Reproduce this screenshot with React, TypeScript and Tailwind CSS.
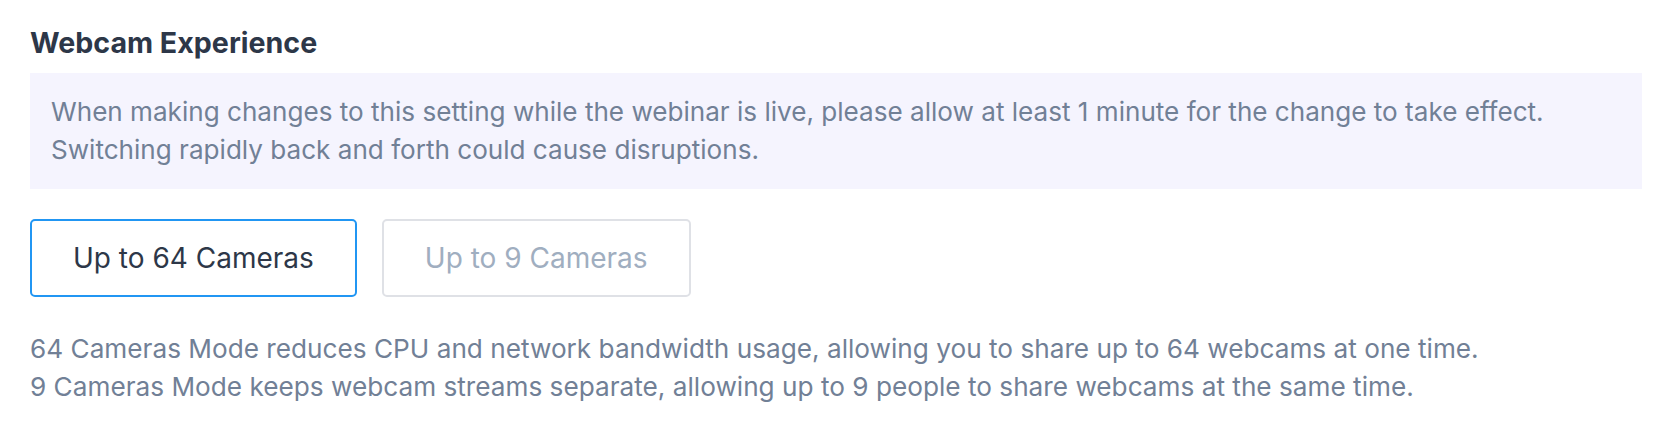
import { useState } from 'react'

const modes = [
  { id: '64', label: 'Up to 64 Cameras' },
  { id: '9', label: 'Up to 9 Cameras' },
]

export default function App() {
  const [mode, setMode] = useState('64')

  return (
    <div className="min-h-screen bg-white pl-[30px] pr-[24px] pt-[26px] font-['Inter',sans-serif]">
      <h2 className="text-[28.6px] leading-[34px] font-bold text-[#2d3748]">Webcam Experience</h2>

      <div className="mt-[13px] bg-[#f5f4fe] px-[21px] py-5 text-[26.1px] leading-[38px] text-[#718096]">
        <p>
          When making changes to this setting while the webinar is live, please allow at least 1 minute for the change to take effect.
        </p>
        <p>Switching rapidly back and forth could cause disruptions.</p>
      </div>

      <div className="mt-[30px] flex gap-[25px]">
        {modes.map((m) => (
          <button
            key={m.id}
            onClick={() => setMode(m.id)}
            className={`rounded-[5px] border-2 px-[41px] py-5 text-[28px] leading-[34px] ${
              mode === m.id
                ? 'border-[#2196f3] text-[#2d3748]'
                : 'border-[#dfe1e6] text-[#a0aec0]'
            }`}
          >
            {m.label}
          </button>
        ))}
      </div>

      <div className="mt-[33px] text-[26.2px] leading-[38px] text-[#718096]">
        <p>64 Cameras Mode reduces CPU and network bandwidth usage, allowing you to share up to 64 webcams at one time.</p>
        <p>9 Cameras Mode keeps webcam streams separate, allowing up to 9 people to share webcams at the same time.</p>
      </div>
    </div>
  )
}
